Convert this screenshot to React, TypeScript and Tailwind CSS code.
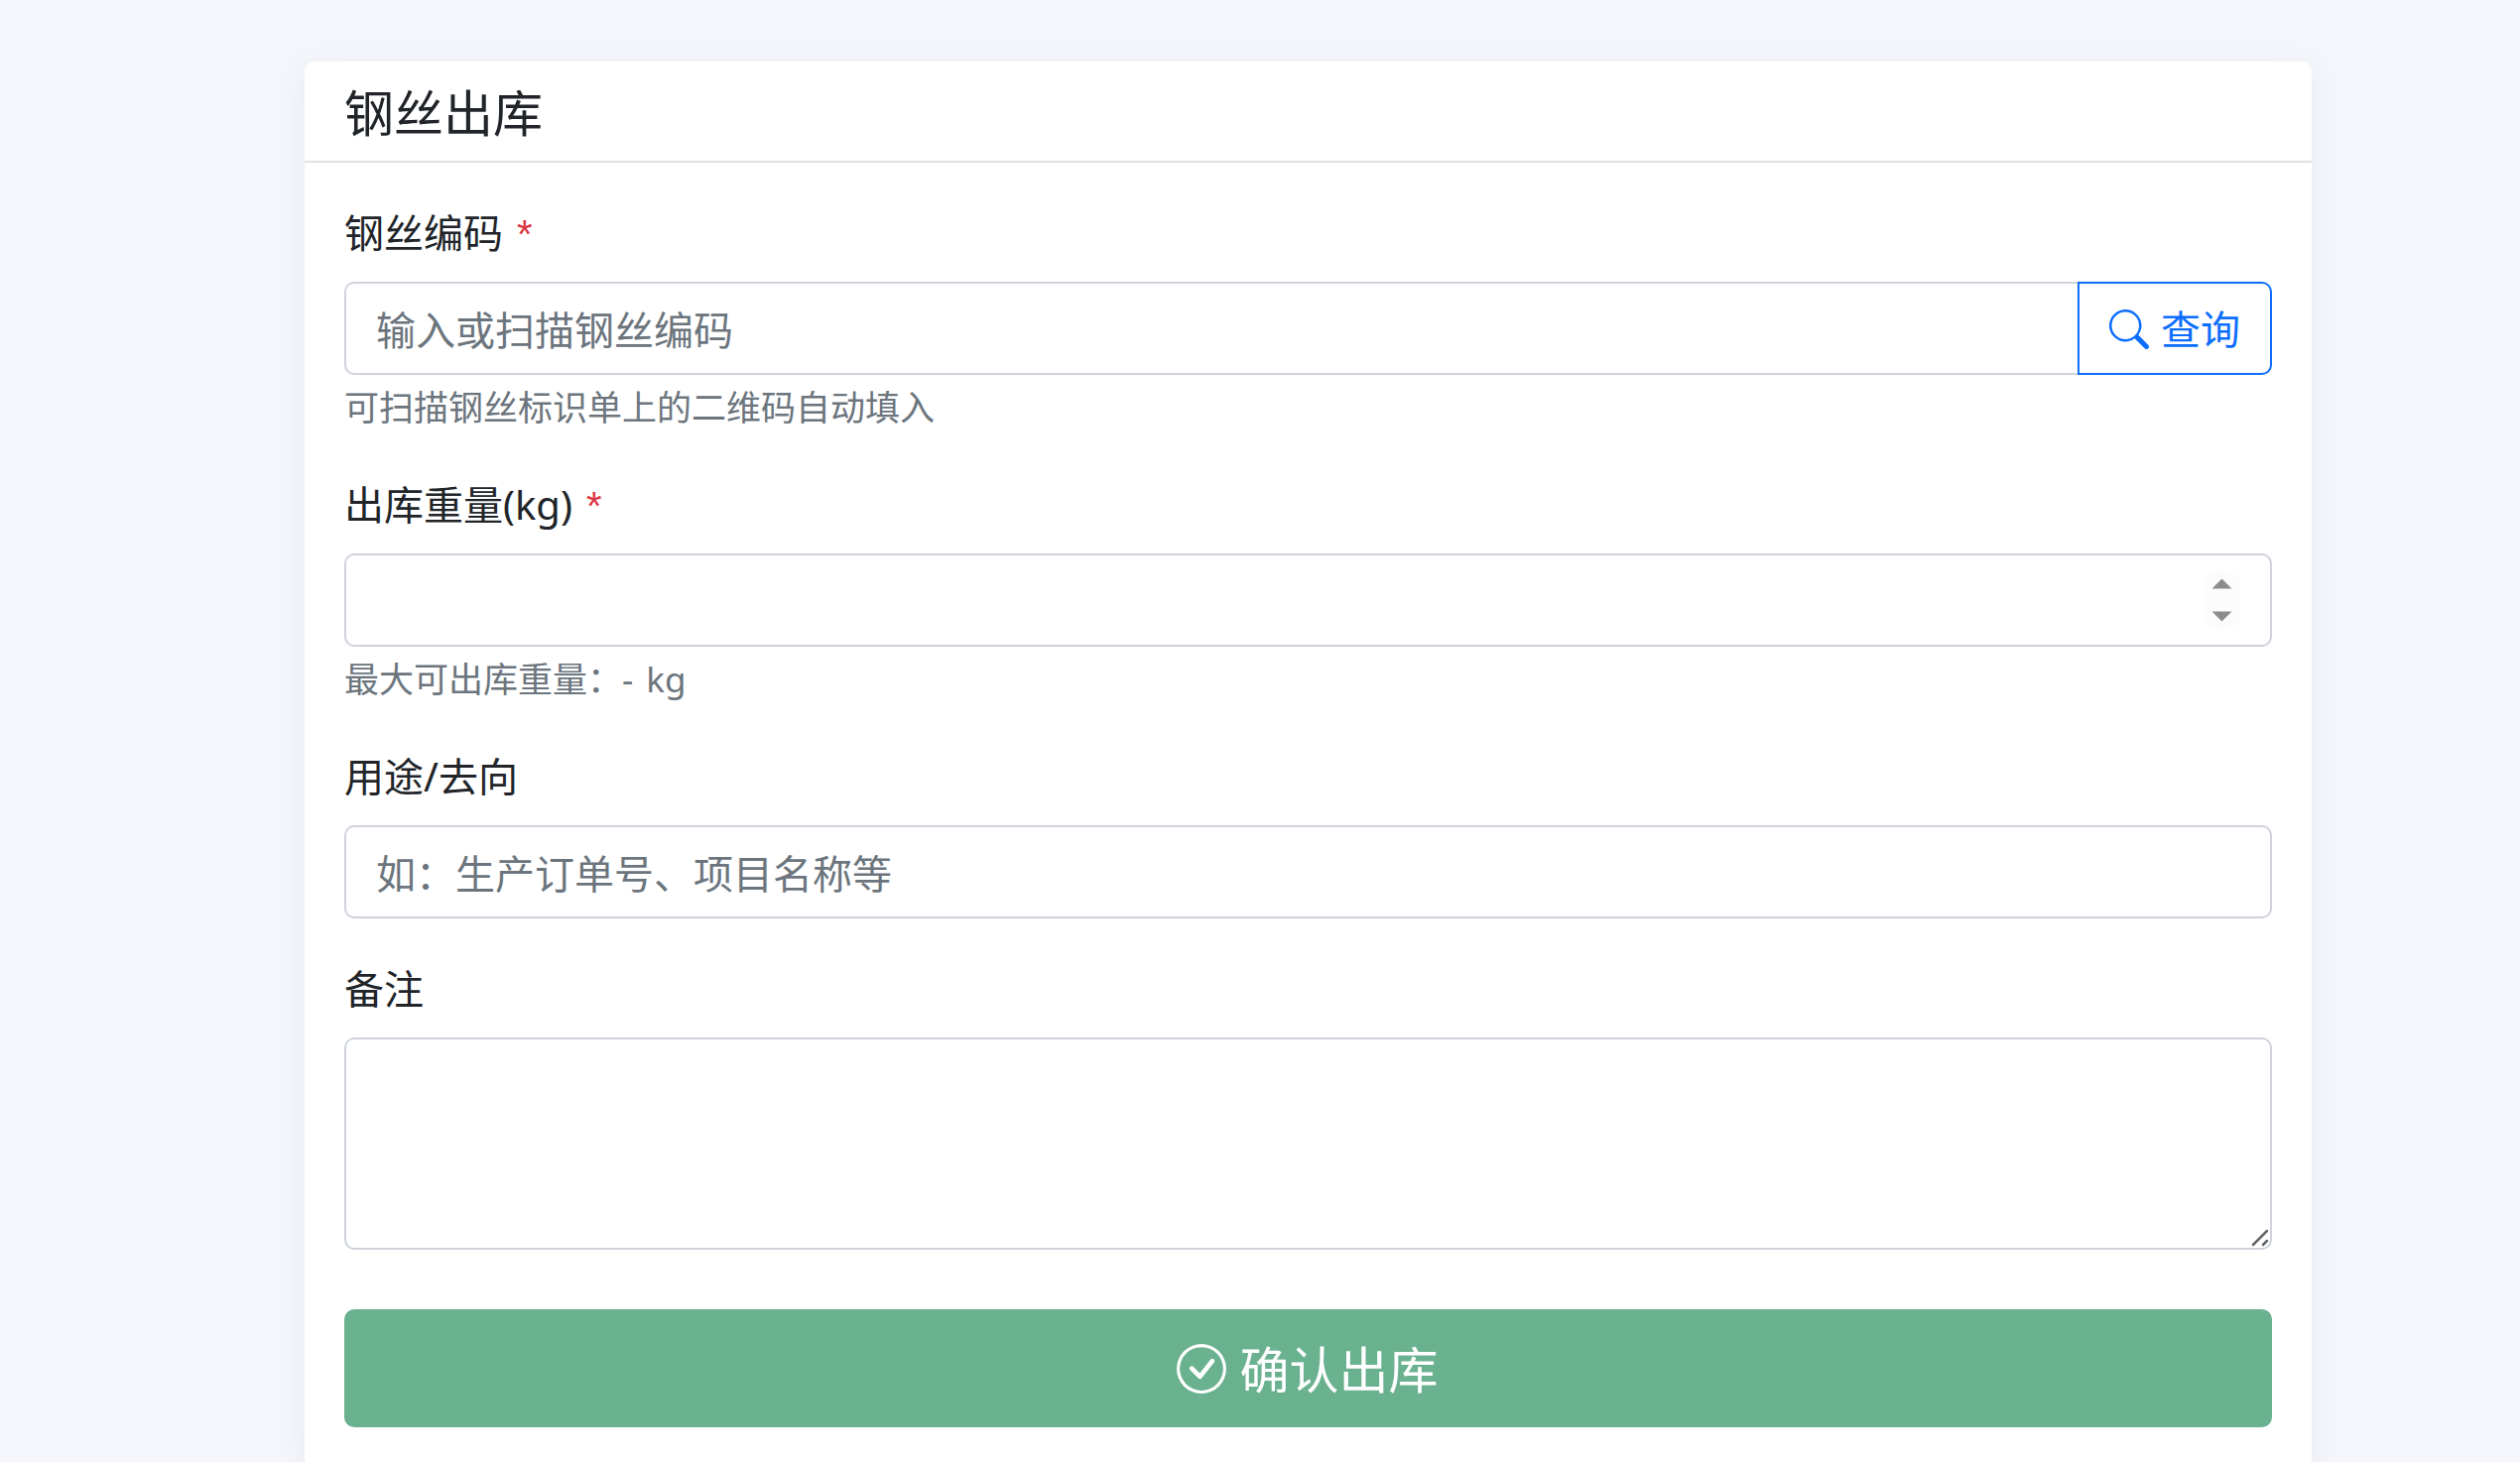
import { BsSearch, BsCheckCircle } from "react-icons/bs";

const font = "font-['Noto_Sans','Noto_Sans_CJK_SC',sans-serif]";
const inputClass =
  "w-full h-[94px] px-[30px] pt-[2px] text-[40px] text-[#212529] placeholder:text-[#6c757d] bg-white border-2 border-[#ced4da] outline-none";

function Label({ text, required }: { text: string; required?: boolean }) {
  return (
    <label className="block h-[60px] mb-5 pt-px text-[40px] leading-[60px] text-[#212529]">
      {text}
      {required && <span className="ml-[14px] font-['Liberation_Sans',sans-serif] text-[#dc3545]">*</span>}
    </label>
  );
}

function Help({ text }: { text: string }) {
  return <div className="mt-2 h-[52px] text-[35px] leading-[50px] text-[#6c757d] [word-spacing:4px]">{text}</div>;
}

export default function App() {
  return (
    <div className={`${font} h-screen overflow-hidden bg-[#f4f6fb] pt-[62px] pl-[307px] pr-[210px]`}>
      <div className="bg-white rounded-[10px] shadow-[0_5px_30px_rgba(0,0,0,0.05)]">
        <div className="h-[102px] px-10 pt-[22px] border-b-2 border-[#dee2e6] text-[50px] leading-[60px] text-[#212529]">
          钢丝出库
        </div>
        <div className="px-10 pt-10 pb-10">
          <div className="mb-10">
            <Label text="钢丝编码" required />
            <div className="flex">
              <input className={`${inputClass} flex-1 min-w-0 rounded-l-[10px]`} placeholder="输入或扫描钢丝编码" />
              <button className="flex items-center justify-center shrink-0 w-[196px] h-[94px] -ml-0.5 pt-[2px] border-2 border-[#0d6efd] rounded-r-[10px] text-[40px] text-[#0d6efd] bg-white">
                <BsSearch className="w-10 h-10 mr-[12px]" />
                查询
              </button>
            </div>
            <Help text="可扫描钢丝标识单上的二维码自动填入" />
          </div>

          <div className="mb-10">
            <Label text="出库重量(kg)" required />
            <div className="relative">
              <input className={`${inputClass} rounded-[10px]`} />
              <svg className="absolute right-[32px] top-[17px]" width="37" height="60" viewBox="0 0 37 60">
                <rect width="37" height="60" rx="16" fill="#fcfcfc" />
                <path d="M8.5 18.5 18.5 8.5 28.5 18.5Z" fill="#8c8c8c" />
                <path d="M8.5 41.5 28.5 41.5 18.5 51.5Z" fill="#8c8c8c" />
              </svg>
            </div>
            <Help text="最大可出库重量：- kg" />
          </div>

          <div className="mb-10">
            <Label text="用途/去向" />
            <input className={`${inputClass} rounded-[10px]`} placeholder="如：生产订单号、项目名称等" />
          </div>

          <div className="mb-[60px]">
            <Label text="备注" />
            <div className="relative">
              <textarea className={`${inputClass} !h-[214px] block rounded-[10px] resize-none`} />
              <svg className="absolute right-[2px] bottom-[2px]" width="20" height="20" viewBox="0 0 20 20">
                <path d="M3 17 17 3M13 17 17 13" stroke="#666" strokeWidth="2.5" strokeLinecap="round" />
              </svg>
            </div>
          </div>

          <button className="flex items-center justify-center w-full h-[119px] pt-[3px] rounded-[10px] bg-[#6ab18f] text-[50px] text-white">
            <BsCheckCircle className="w-[50px] h-[50px] mr-[14px] -mt-[3px] -ml-[2px]" />
            确认出库
          </button>
        </div>
      </div>
    </div>
  );
}
